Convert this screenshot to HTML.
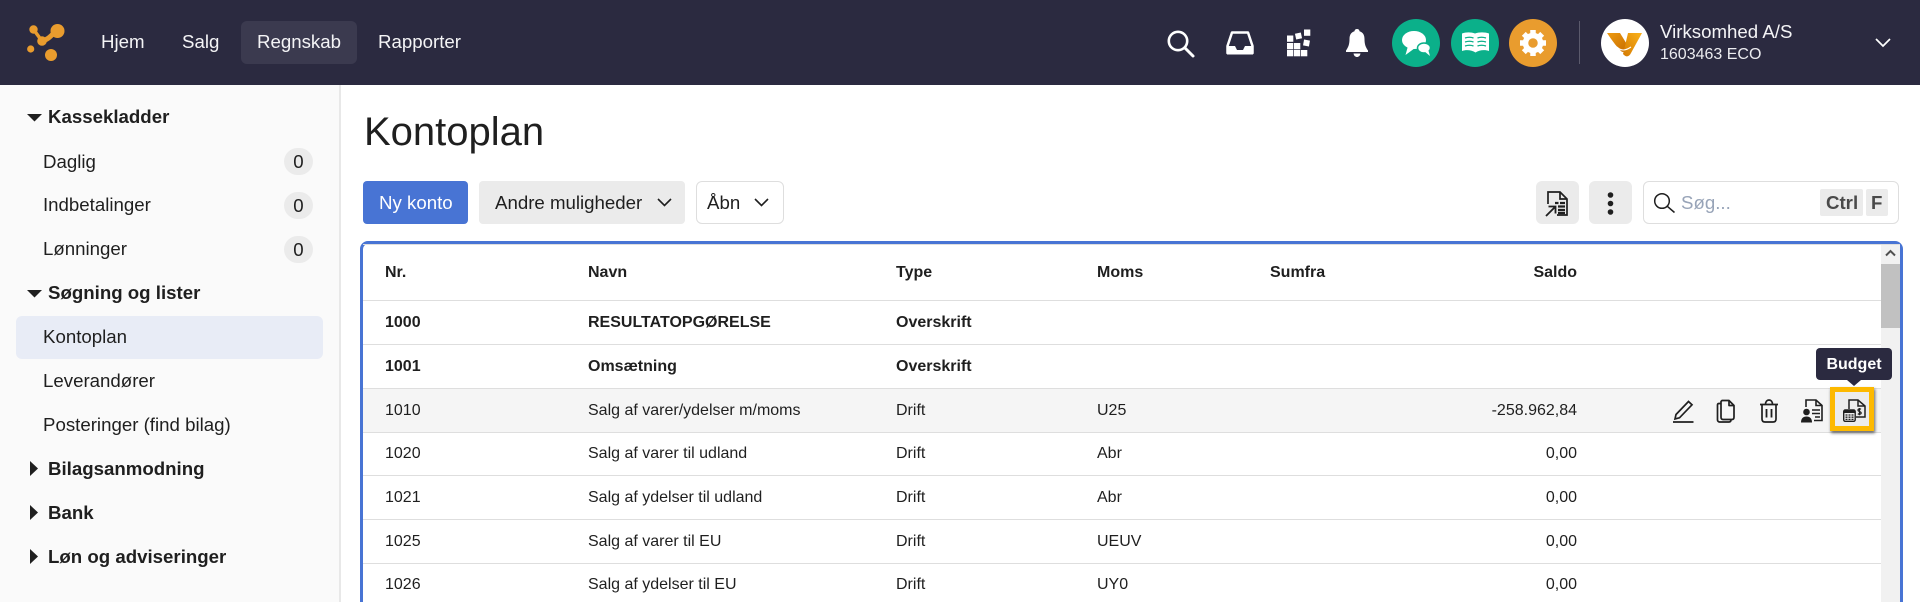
<!DOCTYPE html>
<html lang="da"><head><meta charset="utf-8"><title>Kontoplan</title>
<style>
*{box-sizing:border-box}
html,body{margin:0;padding:0;width:1920px;height:602px;overflow:hidden;background:#fff;font-family:"Liberation Sans",sans-serif;color:#1f1f1f}
#p{position:relative;width:1920px;height:602px;overflow:hidden}
.a{position:absolute;white-space:nowrap}
.t{position:absolute;white-space:nowrap;line-height:20px}
svg{position:absolute;overflow:visible}
.nav{color:#f4f4f6;font-size:18.67px;top:32px}
.side{font-size:18.67px;left:43px}
.sh{font-size:18.67px;font-weight:700;left:48px}
.badge{position:absolute;left:284px;width:29px;height:27px;border-radius:14px;background:#ebebeb;text-align:center;font-size:18.67px;line-height:27px}
.c{font-size:16px;margin-top:1px}
.b{font-weight:700}
.line{position:absolute;left:363px;width:1518px;height:1px;background:#dedede}
</style></head><body><div id="p">
<div class="a" style="left:0;top:0;width:1920px;height:85px;background:#2b2a40"></div>
<div class="a" style="left:0;top:85px;width:339px;height:517px;background:#fafafa"></div>
<div class="a" style="left:339px;top:85px;width:2px;height:517px;background:#e8e8e8"></div>

<svg style="left:26px;top:22px" width="40" height="42" viewBox="0 0 40 42"><g fill="#e99c2e"><circle cx="7.500" cy="7.500" r="4.200"/><circle cx="16" cy="19" r="4.800"/><circle cx="31.500" cy="9" r="7"/><circle cx="4.700" cy="27" r="3.600"/><circle cx="25" cy="33" r="6"/></g><path d="M7.500 7.500 16 19" fill="none" stroke="#e99c2e" stroke-width="3.500"/><path d="M16 19C21 18 24 15 29 10" fill="none" stroke="#e99c2e" stroke-width="5"/></svg>
<div class="a" style="left:241px;top:21px;width:116px;height:43px;border-radius:6px;background:#3b3a4f"></div>
<div class="t nav" style="left:101px">Hjem</div>
<div class="t nav" style="left:182px">Salg</div>
<div class="t nav" style="left:257px">Regnskab</div>
<div class="t nav" style="left:378px">Rapporter</div>

<svg style="left:1166px;top:28px" width="30" height="30" viewBox="0 0 30 30"><circle cx="12" cy="13" r="9.200" fill="none" stroke="#fff" stroke-width="2.600"/><path d="M19 20 27 28" stroke="#fff" stroke-width="3" stroke-linecap="round"/></svg>
<svg style="left:1226px;top:31px" width="28" height="24" viewBox="0 0 28 24"><path d="M6 1.500H22L26.500 15V22H1.500V15Z" fill="none" stroke="#fff" stroke-width="2.500" stroke-linejoin="round"/><path d="M1 15H9L11 19H17L19 15H27V23.500H1Z" fill="#fff"/></svg>
<svg style="left:1287px;top:29px" width="25" height="28" viewBox="0 0 25 28" fill="#fff"><rect x="0" y="6.500" width="6.300" height="6.300"/><rect x="0" y="14" width="6.300" height="6.300"/><rect x="7" y="14" width="6.300" height="6.300"/><rect x="0" y="21" width="6.300" height="6.300"/><rect x="7" y="21" width="6.300" height="6.300"/><rect x="14" y="21" width="6.300" height="6.300"/><rect x="8.500" y="4" width="6" height="6" transform="rotate(-12 11.500 7)"/><rect x="17" y="0.500" width="6.300" height="6.300"/><rect x="16.500" y="11" width="6" height="6" transform="rotate(10 19.500 14)"/></svg>
<svg style="left:1346px;top:29px" width="22" height="28" viewBox="0 0 22 28" fill="#fff"><path d="M11 0C12.500 0 13.500 1 13.500 2.200C17 3.200 18.500 6 18.500 10C18.500 15 19.500 18 22 21.500V23H0V21.500C2.500 18 3.500 15 3.500 10C3.500 6 5 3.200 8.500 2.200C8.500 1 9.500 0 11 0Z"/><path d="M7.500 24.500H14.500C14 27 12.500 28 11 28C9.500 28 8 27 7.500 24.500Z"/></svg>

<div class="a" style="left:1392px;top:19px;width:48px;height:48px;border-radius:50%;background:#0bb08a"></div>
<svg style="left:1402px;top:31px" width="30" height="26" viewBox="0 0 30 26" fill="#fff"><ellipse cx="12" cy="9" rx="12" ry="9"/><path d="M6 15 3.500 24 13 17Z"/><ellipse cx="22" cy="17" rx="6.500" ry="5" stroke="#0bb08a" stroke-width="1.500"/><path d="M22 20 28 25 26 18Z"/></svg>
<div class="a" style="left:1451px;top:19px;width:48px;height:48px;border-radius:50%;background:#0bb08a"></div>
<svg style="left:1462px;top:32px" width="27" height="21" viewBox="0 0 27 21"><path d="M0 1.500C4 0 9 0 13 1.500C17 0 23 0 27 1.500V19C23 17.500 17 18 13.500 20.500C10 18 4 17.500 0 19Z" fill="#fff"/><path d="M3 6C6 5 9 5 11.500 6M15.500 6C18 5 21 5 24 6M3 10C6 9 9 9 11.500 10M15.500 10C18 9 21 9 24 10M3 14C6 13 9 13 11.500 14M15.500 14C18 13 21 13 24 14" fill="none" stroke="#0bb08a" stroke-width="1.300"/></svg>
<div class="a" style="left:1509px;top:19px;width:48px;height:48px;border-radius:50%;background:#e99c2e"></div>
<svg style="left:1519px;top:29px" width="28" height="28" viewBox="0 0 28 28"><circle cx="14" cy="14" r="7.500" fill="none" stroke="#fff" stroke-width="5.500"/><g stroke="#fff" stroke-width="5.500"><path d="M14 1V6M14 22V27M1 14H6M22 14H27M4.800 4.800 8.300 8.300M19.700 19.700 23.200 23.200M4.800 23.200 8.300 19.700M19.700 8.300 23.200 4.800"/></g></svg>

<div class="a" style="left:1579px;top:21px;width:1px;height:43px;background:#5b5a6c"></div>
<div class="a" style="left:1601px;top:19px;width:48px;height:48px;border-radius:50%;background:#fff"></div>
<svg style="left:1607px;top:32px" width="36" height="26" viewBox="0 0 36 26"><defs><linearGradient id="g1" x1="0" y1="0" x2="1" y2="1"><stop offset="0" stop-color="#ee9a10"/><stop offset="1" stop-color="#c66c00"/></linearGradient><linearGradient id="g2" x1="1" y1="0" x2="0" y2="1"><stop offset="0" stop-color="#fbb21a"/><stop offset="1" stop-color="#d47a02"/></linearGradient></defs><path d="M0 1H13L21 14C18 20 16 21 14 19C9 14 4 7 0 1Z" fill="url(#g1)"/><path d="M21 1H35L24 21C22 25 19 25.500 16 22L17 18Z" fill="url(#g2)"/><path d="M10 15C14 19 18 19 24 15" fill="none" stroke="#fff" stroke-width="1.100"/></svg>
<div class="t" style="left:1660px;top:22px;font-size:18.67px;color:#f4f4f6">Virksomhed A/S</div>
<div class="t" style="left:1660px;top:45px;font-size:16px;color:#ececf0">1603463 ECO</div>
<svg style="left:1875px;top:37px" width="16" height="12" viewBox="0 0 16 12"><path d="M1 2 8 9 15 2" fill="none" stroke="#fff" stroke-width="1.700"/></svg>

<svg style="left:27px;top:114px" width="15" height="8"><path d="M0 0H15L7.500 7.500Z" fill="#1f1f1f"/></svg>
<div class="t sh" style="top:107px">Kassekladder</div>
<div class="t side" style="top:152px">Daglig</div><div class="badge" style="top:148px">0</div>
<div class="t side" style="top:195px">Indbetalinger</div><div class="badge" style="top:192px">0</div>
<div class="t side" style="top:239px">Lønninger</div><div class="badge" style="top:236px">0</div>
<svg style="left:27px;top:290px" width="15" height="8"><path d="M0 0H15L7.500 7.500Z" fill="#1f1f1f"/></svg>
<div class="t sh" style="top:283px">Søgning og lister</div>
<div class="a" style="left:16px;top:316px;width:307px;height:43px;border-radius:6px;background:#e8ecf6"></div>
<div class="t side" style="top:327px">Kontoplan</div>
<div class="t side" style="top:371px">Leverandører</div>
<div class="t side" style="top:415px">Posteringer (find bilag)</div>
<svg style="left:30px;top:461px" width="8" height="15"><path d="M0 0V15L8 7.500Z" fill="#1f1f1f"/></svg>
<div class="t sh" style="top:459px">Bilagsanmodning</div>
<svg style="left:30px;top:505px" width="8" height="15"><path d="M0 0V15L8 7.500Z" fill="#1f1f1f"/></svg>
<div class="t sh" style="top:503px">Bank</div>
<svg style="left:30px;top:549px" width="8" height="15"><path d="M0 0V15L8 7.500Z" fill="#1f1f1f"/></svg>
<div class="t sh" style="top:547px">Løn og adviseringer</div>

<div class="a" style="left:364px;top:110px;font-size:40px;line-height:44px">Kontoplan</div>

<div class="a" style="left:363px;top:181px;width:105px;height:43px;border-radius:4px;background:#4874d4"></div>
<div class="t" style="left:379px;top:193px;font-size:18.67px;color:#fff">Ny konto</div>
<div class="a" style="left:479px;top:181px;width:206px;height:43px;border-radius:4px;background:#ebebeb"></div>
<div class="t" style="left:495px;top:193px;font-size:18.67px">Andre muligheder</div>
<svg style="left:657px;top:198px" width="15" height="10"><path d="M1 1 7.500 7.500 14 1" fill="none" stroke="#1f1f1f" stroke-width="1.600"/></svg>
<div class="a" style="left:696px;top:181px;width:88px;height:43px;border-radius:6px;background:#fff;border:1px solid #dedede"></div>
<div class="t" style="left:707px;top:193px;font-size:18.67px">Åbn</div>
<svg style="left:754px;top:198px" width="15" height="10"><path d="M1 1 7.500 7.500 14 1" fill="none" stroke="#1f1f1f" stroke-width="1.600"/></svg>

<div class="a" style="left:1536px;top:181px;width:43px;height:43px;border-radius:6px;background:#ebebeb"></div>
<svg style="left:1545px;top:191px" width="24" height="26" viewBox="0 0 24 26" fill="none" stroke="#1f1f1f" stroke-width="1.700"><path d="M3 13V1H15L22 8V24H12"/><path d="M15 1V8H22"/><path d="M10 12H13.500M15 12H20M13 15.500H20M13 19H20M13 22H20" stroke-width="2.200"/><path d="M1 25 9.500 16.500M3.500 15.500H10.500V22.500" stroke-width="1.800"/></svg>
<div class="a" style="left:1589px;top:181px;width:43px;height:43px;border-radius:6px;background:#ebebeb"></div>
<svg style="left:1607px;top:192px" width="7" height="23" fill="#1f1f1f"><circle cx="3.500" cy="3" r="2.800"/><circle cx="3.500" cy="11.500" r="2.800"/><circle cx="3.500" cy="20" r="2.800"/></svg>
<div class="a" style="left:1643px;top:181px;width:256px;height:43px;border-radius:6px;background:#fff;border:1px solid #dedede"></div>
<svg style="left:1654px;top:193px" width="21" height="20" viewBox="0 0 21 20" fill="none" stroke="#1f1f1f" stroke-width="1.500"><circle cx="8" cy="8" r="7.300"/><path d="M13.300 13.300 20.500 19.500"/></svg>
<div class="t" style="left:1681px;top:193px;font-size:18.67px;color:#98a4b8">Søg...</div>
<div class="a" style="left:1820px;top:189px;width:43px;height:27px;border-radius:2px;background:#ebebeb"></div>
<div class="t" style="left:1826px;top:193px;font-size:18.67px;font-weight:700;color:#4a4a4a">Ctrl</div>
<div class="a" style="left:1866px;top:189px;width:22px;height:27px;border-radius:2px;background:#ebebeb"></div>
<div class="t" style="left:1871px;top:193px;font-size:18.67px;font-weight:700;color:#4a4a4a">F</div>

<div class="a" style="left:360px;top:241px;width:1543px;height:380px;border:3px solid #4874d4;border-radius:8px"></div>
<div class="a" style="left:363px;top:244px;width:1537px;height:1px;background:#dedede"></div>
<div class="a" style="left:1881px;top:245px;width:19px;height:357px;background:#f1f1f1"></div>
<div class="a" style="left:1881px;top:264px;width:19px;height:64px;background:#c1c1c1"></div>
<svg style="left:1885px;top:249px" width="11" height="8"><path d="M1 6.500 5.500 2 10 6.500" fill="none" stroke="#505050" stroke-width="2"/></svg>

<div class="a" style="left:363px;top:388px;width:1518px;height:44px;background:#f5f5f5"></div>
<div class="line" style="top:300px"></div>
<div class="line" style="top:344px"></div>
<div class="line" style="top:388px"></div>
<div class="line" style="top:432px"></div>
<div class="line" style="top:475px"></div>
<div class="line" style="top:519px"></div>
<div class="line" style="top:563px"></div>

<div class="t c b" style="left:385px;top:262px">Nr.</div>
<div class="t c b" style="left:588px;top:262px">Navn</div>
<div class="t c b" style="left:896px;top:262px">Type</div>
<div class="t c b" style="left:1097px;top:262px">Moms</div>
<div class="t c b" style="left:1270px;top:262px">Sumfra</div>
<div class="t c b" style="right:343px;top:262px">Saldo</div>

<div class="t c b" style="left:385px;top:312px">1000</div>
<div class="t c b" style="left:588px;top:312px">RESULTATOPGØRELSE</div>
<div class="t c b" style="left:896px;top:312px">Overskrift</div>

<div class="t c b" style="left:385px;top:356px">1001</div>
<div class="t c b" style="left:588px;top:356px">Omsætning</div>
<div class="t c b" style="left:896px;top:356px">Overskrift</div>

<div class="t c" style="left:385px;top:400px">1010</div>
<div class="t c" style="left:588px;top:400px">Salg af varer/ydelser m/moms</div>
<div class="t c" style="left:896px;top:400px">Drift</div>
<div class="t c" style="left:1097px;top:400px">U25</div>
<div class="t c" style="right:343px;top:400px">-258.962,84</div>

<div class="t c" style="left:385px;top:443px">1020</div>
<div class="t c" style="left:588px;top:443px">Salg af varer til udland</div>
<div class="t c" style="left:896px;top:443px">Drift</div>
<div class="t c" style="left:1097px;top:443px">Abr</div>
<div class="t c" style="right:343px;top:443px">0,00</div>

<div class="t c" style="left:385px;top:487px">1021</div>
<div class="t c" style="left:588px;top:487px">Salg af ydelser til udland</div>
<div class="t c" style="left:896px;top:487px">Drift</div>
<div class="t c" style="left:1097px;top:487px">Abr</div>
<div class="t c" style="right:343px;top:487px">0,00</div>

<div class="t c" style="left:385px;top:531px">1025</div>
<div class="t c" style="left:588px;top:531px">Salg af varer til EU</div>
<div class="t c" style="left:896px;top:531px">Drift</div>
<div class="t c" style="left:1097px;top:531px">UEUV</div>
<div class="t c" style="right:343px;top:531px">0,00</div>

<div class="t c" style="left:385px;top:574px">1026</div>
<div class="t c" style="left:588px;top:574px">Salg af ydelser til EU</div>
<div class="t c" style="left:896px;top:574px">Drift</div>
<div class="t c" style="left:1097px;top:574px">UY0</div>
<div class="t c" style="right:343px;top:574px">0,00</div>

<svg style="left:1673px;top:399px" width="21" height="24" viewBox="0 0 21 24" fill="none" stroke="#1f1f1f" stroke-width="1.700"><path d="M3 15.500 15.500 2.500 19 5.800 6.500 18.800 2 20Z"/><path d="M0 23H20.500"/></svg>
<svg style="left:1716px;top:399px" width="20" height="24" viewBox="0 0 20 24" fill="none" stroke="#1f1f1f" stroke-width="1.700" stroke-linejoin="round"><path d="M6 1.500H13L18 6.500V18C18 19.500 17.500 20.500 16 20.500H7C5.500 20.500 5 19.500 5 18V2.500Z"/><path d="M13 1.500V6.500H18"/><path d="M5 4.500H3C2 4.500 1.500 5 1.500 6V21C1.500 22 2.500 23 3.500 23H13C14.500 23 15 22 15 20.500"/></svg>
<svg style="left:1759px;top:399px" width="20" height="24" viewBox="0 0 20 24" fill="none" stroke="#1f1f1f" stroke-width="1.700"><path d="M1 5.500H19M6.500 5.500C6.500 2.500 8 1 10 1C12 1 13.500 2.500 13.500 5.500"/><path d="M3 5.500V20C3 22 4 23 6 23H14C16 23 17 22 17 20V5.500"/><path d="M7.500 10V18.500M12.500 10V18.500" stroke-width="1.800"/></svg>
<svg style="left:1801px;top:399px" width="22" height="24" viewBox="0 0 22 24" fill="none"><path d="M5 8V1H15L21 6.500V21.500H13" stroke="#1f1f1f" stroke-width="1.600"/><path d="M15 1V6.500H21" stroke="#1f1f1f" stroke-width="1.600"/><path d="M11 11H19M11 14.500H19M14 18H19" stroke="#1f1f1f" stroke-width="1.500"/><circle cx="5.500" cy="13" r="3.300" fill="#1f1f1f"/><path d="M0 23.500C0 19.500 2 17.500 5.500 17.500C9 17.500 11 19.500 11 23.500Z" fill="#1f1f1f"/></svg>

<div class="a" style="left:1830px;top:387px;width:44px;height:44px;border:5px solid #fdb900;box-shadow:1px 2px 3px rgba(0,0,0,.6);background:#ececec"></div>
<svg style="left:1843px;top:399px" width="23" height="23" viewBox="0 0 23 23" fill="none"><path d="M6 10V1H15L22 7V18H13" stroke="#1f1f1f" stroke-width="1.500"/><path d="M15 1V7H22" stroke="#1f1f1f" stroke-width="1.500"/><rect x="0.700" y="11" width="11.500" height="11.300" rx="1.500" stroke="#1f1f1f" stroke-width="1.400"/><path d="M1 11H12V14H1Z" fill="#1f1f1f"/><path d="M2.500 16H4.500M5.500 16H7.500M8.500 16H10.500M2.500 18.200H4.500M5.500 18.200H7.500M8.500 18.200H10.500M2.500 20.400H4.500M5.500 20.400H7.500M8.500 20.400H10.500" stroke="#1f1f1f" stroke-width="1.300"/><path d="M18 10.300C17 9.500 15 9.700 15 11.100C15 12.800 18.200 12.300 18.200 14C18.200 15.300 16.300 15.600 14.800 14.700M16.500 9V16.300" stroke="#1f1f1f" stroke-width="1.200"/></svg>
<div class="a" style="left:1816px;top:348px;width:76px;height:32px;border-radius:4px;background:#2b2a40;color:#fff;font-size:16px;font-weight:700;text-align:center;line-height:33px">Budget</div>
<svg style="left:1847px;top:380px" width="14" height="6"><path d="M0 0H14L7 6Z" fill="#2b2a40"/></svg>
</div></body></html>
